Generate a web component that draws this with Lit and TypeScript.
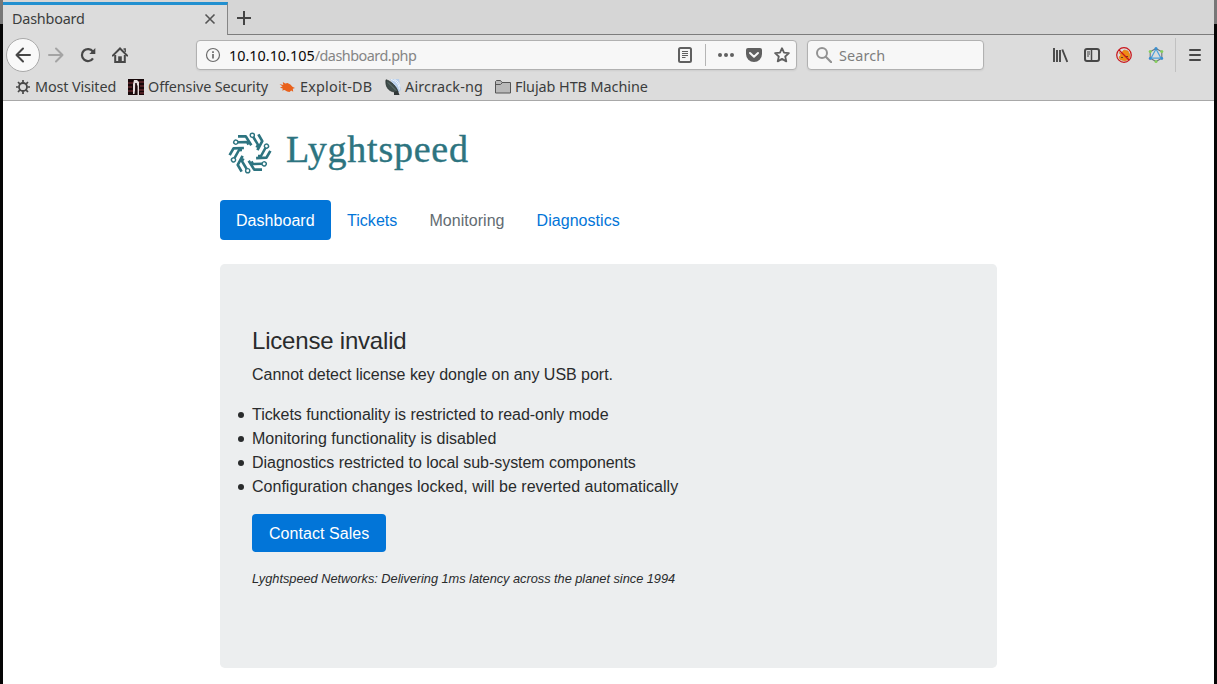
import { LitElement, html, svg, css } from "lit";
import { customElement } from "lit/decorators.js";

@customElement("browser-chrome")
class BrowserChrome extends LitElement {
  static styles = css`
    :host { display: block; height: 101px; box-sizing: border-box; background: #dcdcdc; border-bottom: 1px solid #a8a8a8; font: 14.4px/20px "Noto Sans", sans-serif; color: #3b3d3d; white-space: nowrap; }
    svg { display: block; flex: none; }
    .tabs { display: flex; height: 35px; box-sizing: border-box; background: #d6d6d6; }
    .tab { width: 225px; box-sizing: border-box; margin-top: 2px; border-top: 3px solid #2290d0; border-right: 1px solid #868686; background: #dcdcdc; display: flex; align-items: center; justify-content: space-between; padding: 0 11px 2px 9px; }
    .tab-title { letter-spacing: -0.2px; }
    .rest { flex: 1; border-bottom: 1px solid #7c7c7c; padding: 11px 0 0 9px; }
    .toolbar { display: flex; align-items: center; height: 40px; padding-left: 3px; }
    .back { width: 34px; height: 34px; box-sizing: border-box; border: 1px solid #a9a9a9; border-radius: 50%; background: #f9f9f9; display: grid; place-items: center; }
    .icons { display: flex; gap: 16px; margin-left: 8px; }
    .field { display: flex; align-items: center; box-sizing: border-box; height: 30px; background: #f7f7f7; border: 1px solid #b1b1b1; border-radius: 4px; box-shadow: 0 1px 2px #0001; }
    .url { width: 601px; margin-left: 68px; padding: 0 6px 0 8px; color: #858585; }
    .url-text { margin-left: 8px; flex: 1; padding-top: 2px; letter-spacing: -0.5px; }
    .host { color: #080808; letter-spacing: 0; }
    .sep { width: 1px; height: 22px; background: #b5b5b5; margin: 0 12px; }
    .search { width: 177px; margin-left: 10px; padding-left: 8px; gap: 7px; color: #7e7e7e; }
    .placeholder { padding-top: 2px; letter-spacing: 0.1px; }
    .right { display: flex; align-items: center; gap: 16px; margin-left: 68px; }
    .divider { width: 1px; height: 34px; background: #c1c1c1; margin: 0 11px; }
    .pocket { margin: 0 12px; }
    .bookmarks { display: flex; height: 23px; align-items: center; padding-left: 12px; }
    .bm { display: flex; align-items: center; gap: 4px; flex: none; }
    .b0 { width: 113px; letter-spacing: -0.13px; }
    .b1 { width: 151px; letter-spacing: -0.11px; }
    .b2 { width: 106px; letter-spacing: 0.2px; gap: 5px; }
    .b3 { width: 110px; letter-spacing: 0.18px; }
    .b4 { letter-spacing: -0.06px; }
  `;

  private icon(body: unknown, size = 16) {
    return html`<svg width=${size} height=${size} viewBox="0 0 16 16" fill="none" stroke="#474747" stroke-width="2">${body}</svg>`;
  }

  render() {
    return html`
      <div class="tabs">
        <div class="tab"><span class="tab-title">Dashboard</span>
          <svg width="12" height="12" viewBox="0 0 12 12" stroke="#555" stroke-width="1.6"><path d="M1.5 1.5l9 9m0-9l-9 9" /></svg></div>
        <div class="rest"><svg width="14" height="14" viewBox="0 0 14 14" stroke="#444" stroke-width="2"><path d="M7 0v14M0 7h14" /></svg></div>
      </div>
      <div class="toolbar">
        <div class="back">${this.icon(svg`<path d="M15 8H1.5M8 1.5L1.5 8 8 14.5" stroke-linecap="round" stroke-linejoin="round" />`)}</div>
        <div class="icons">
          ${this.icon(svg`<path d="M1 8h13.5M8 1.5L14.5 8 8 14.5" stroke="#a4a4a4" stroke-linecap="round" stroke-linejoin="round" />`)}
          ${this.icon(svg`<path d="M12.8 4.5A6 6 0 1 0 13 11.3" stroke-width="2.2" /><path d="M15.3 1v6H9.3z" fill="#474747" stroke="none" />`)}
          ${this.icon(svg`<path d="M.8 8.6L8 1.5l7.2 7.1" stroke-linecap="round" /><path d="M3.2 8v6.9h9.6V8" /><path d="M6.2 15V9.3h3.6V15" fill="#474747" stroke="none" /><path d="M11.5 2h1.7v3" stroke-width="1.4" />`)}
        </div>
        <div class="field url">
          ${this.icon(svg`<g stroke="#6b6b6b"><circle cx="8" cy="8" r="6.5" stroke-width="1.2" /><path d="M8 7v4.5M8 4.2v1.7" stroke-width="1.7" /></g>`)}
          <span class="url-text"><span class="host">10.10.10.105</span>/dashboard.php</span>
          ${this.icon(svg`<rect x="2" y="1" width="12" height="14" rx="1.5" stroke="#606060" /><path d="M5 4.5h6M5 6.5h6M5 8.5h6M5 10.5h3.5" stroke="#606060" stroke-width="1" />`)}
          <span class="sep"></span>
          ${this.icon(svg`<g fill="#606060" stroke="none"><circle cx="2" cy="8" r="2" /><circle cx="8" cy="8" r="2" /><circle cx="14" cy="8" r="2" /></g>`)}
          <svg class="pocket" width="16" height="16" viewBox="0 0 16 16"><path d="M2 1h12a2 2 0 0 1 2 2v4a8 8 0 0 1-16 0V3a2 2 0 0 1 2-2z" fill="#606060" /><path d="M4 6l4 3.8L12 6" fill="none" stroke="#f7f7f7" stroke-width="2" stroke-linecap="round" stroke-linejoin="round" /></svg>
          ${this.icon(svg`<path d="M8 1.2l2 4.5 4.9.5-3.7 3.3 1.1 4.9L8 11.9l-4.3 2.5 1.1-4.9L1.1 6.2 6 5.7z" stroke="#606060" stroke-width="1.8" stroke-linejoin="round" />`)}
        </div>
        <div class="field search">
          ${this.icon(svg`<circle cx="6" cy="6" r="5" stroke="#929292" /><path d="M9.8 9.8l5.4 5.4" stroke="#929292" stroke-width="2.2" stroke-linecap="round" />`)}
          <span class="placeholder">Search</span>
        </div>
        <div class="right">
          ${this.icon(svg`<path d="M2 1v14M5 3v12M8 3v12M10.3 2.5l5 12.5" stroke-width="1.9" />`)}
          ${this.icon(svg`<rect x="1" y="2" width="14" height="12" rx="2" /><path d="M7.5 2v12" stroke-width="1.5" /><path d="M3 5h3M3 7h3M3 9h2" stroke-width="1" />`)}
          ${this.icon(svg`<path d="M3 5.5l2 .8 3-3.3 4 1 2 4-1 4-4 2-5-1.5-1-2.5 2-2z" fill="#f08a14" stroke="#d87916" stroke-width=".6" /><path d="M5 10h2v1H5zM9 9h3v1H9z" fill="#65451c" stroke="none" /><circle cx="8" cy="8" r="7.3" stroke="#c9141b" stroke-width="1.2" /><path d="M3 3l10 10" stroke="#c9141b" stroke-width="1.2" />`)}
          ${this.icon(svg`<path d="M8 1.5l5.8 3.2v6.6L8 14.5l-5.8-3.2V4.7z" stroke="#69757b" stroke-width="1.1" /><path d="M8 2L3 11.2h10z" stroke="#4ba0dc" stroke-width="1.2" /><g stroke="none" fill="#398fd2"><circle cx="8" cy="1.5" r="1.5" /><circle cx="2.2" cy="11.5" r="1.4" /><circle cx="13.8" cy="11.5" r="1.4" /></g><g stroke="none" fill="#86cf5c"><circle cx="2.2" cy="4.5" r="1.5" /><circle cx="13.8" cy="4.5" r="1.5" /><circle cx="8" cy="14.5" r="1.5" /></g>`)}
        </div>
        <span class="divider"></span>
        ${this.icon(svg`<path d="M3 3h10M3 8h10M3 13h10" stroke-linecap="round" />`)}
      </div>
      <div class="bookmarks">
        <div class="bm b0">${this.icon(svg`<circle cx="8" cy="8" r="4" stroke-width="1.8" /><path d="M8 1v2.4M8 12.6V15M1 8h2.4M12.6 8H15M3 3l1.8 1.8M11.2 11.2L13 13M13 3l-1.8 1.8M4.8 11.2L3 13" stroke-width="1.7" />`)}Most Visited</div>
        <div class="bm b1"><svg width="16" height="16" viewBox="0 0 16 16"><path d="M0 0h16v16H0z" fill="#170709" /><path d="M0 4h5M0 8h4M0 12h5M11 3h5M12 7h4M11 11h5M12 14h4" stroke="#60272b" stroke-width="1.3" /><path d="M6 1h3l2 2v13H9.6V7L8 4 6.5 15H5V5z" fill="#e5dddd" /><path d="M7.2 4h1.5v11H7z" fill="#201014" /></svg>Offensive Security</div>
        <div class="bm b2">${this.icon(svg`<path d="M.5 5l3.8 1L3.8 3l2.4 1.6L8.500 4l2.900 1.500 2 2.300L16 9l-2.200.8.4 3-2-1.200-1.700 1.400-2.400-.6-2.500-1.400-2.600.5 1-1.700L1 8.500l2.600-1z" fill="#e9611b" stroke="none" />`)}Exploit-DB</div>
        <div class="bm b3"><svg width="16" height="16" viewBox="0 0 16 16"><path d="M5 0h9l2 11-3 3z" fill="#b9cfea" /><path d="M6 .5c5 1 8 5 8.500 10M9.500 .5c3 1 5 4 5.500 7" stroke="#f0f5fb" fill="none" stroke-width="1" /><path d="M1 .8C0 8 4 14 13 13 12 8 6 2 1 .8z" fill="#3f4d4b" stroke="#27302f" stroke-width=".8" /><path d="M3 3.500l8 8" stroke="#70807c" stroke-width=".8" /><path d="M9 13l4-1 1.500 4H9z" fill="#303737" /></svg>Aircrack-ng</div>
        <div class="bm b4">${this.icon(svg`<path d="M.5 14V2.500l1-1h4l1.500 2h8.500V14z" fill="#b9b9b9" stroke="#555" stroke-width="1" /><path d="M1 5.500h4.500l1.500-1.500" stroke="#555" stroke-width="1" />`)}Flujab HTB Machine</div>
      </div>`;
  }
}

@customElement("app-root")
class AppRoot extends LitElement {
  static styles = css`
    :host { display: block; box-sizing: border-box; height: 684px; overflow: hidden; background: linear-gradient(#777 24px, #050505 24px); padding: 0 3px; }
    .window { height: 684px; background: #fff; color: #292b2c; font: 16px/24px "Liberation Sans", sans-serif; }
    .container { width: 777px; margin-left: 217px; padding-top: 29px; }
    .brand { display: flex; align-items: center; height: 46px; padding-left: 8px; gap: 14px; color: #2d7480; }
    .word { font: 38px/46px "Liberation Serif", serif; letter-spacing: 0.75px; padding-bottom: 8px; -webkit-text-stroke: 0.4px #2d7480; }
    .nav { display: flex; margin-top: 24px; letter-spacing: 0.045px; }
    .link { padding: 9px 16px 7px; color: #0275d8; }
    .active { background: #0275d8; color: #fff; border-radius: 4px; padding-right: 16.3px; }
    .disabled { color: #636c72; }
    .panel { box-sizing: border-box; height: 404px; margin-top: 24px; padding: 64px 32px; background: #eceeef; border-radius: 4.8px; }
    .title { font-size: 24px; line-height: 26.4px; font-weight: 400; margin: 0 0 9px; letter-spacing: -0.2px; }
    .lead { margin: 0 0 16px; letter-spacing: -0.02px; }
    .list { margin: 0 0 15px; padding: 0; list-style: none; }
    .item { display: flex; align-items: center; gap: 8px; margin-left: -14px; }
    .item::before { content: ""; width: 6px; height: 6px; border-radius: 50%; background: #292b2c; }
    .tight { letter-spacing: -0.04px; }
    .loose { letter-spacing: 0.018px; }
    .button { display: inline-block; box-sizing: border-box; height: 38px; padding: 8px 16.5px 6px 17px; background: #0275d8; color: #fff; border-radius: 4px; vertical-align: top; letter-spacing: 0.05px; }
    .tagline { font-size: 12.8px; font-style: italic; margin: 15px 0 0; letter-spacing: -0.028px; }
  `;

  render() {
    return html`
      <div class="window">
        <browser-chrome></browser-chrome>
        <div class="container">
          <div class="brand">
            <svg width="44" height="44" viewBox="-22 -22 44 44" fill="none" stroke="#2d7480" stroke-width="2.7">
              ${[0, 60, 120, 180, 240, 300].map((a) => svg`<g transform="rotate(${a})"><path d="M-12 -16.6H-4.2L1.3 -7.800" stroke-linejoin="round" /><path d="M3.300 -16L8 -8.200L6.500 -5.500" stroke-width="2.500" /><circle cx="2.300" cy="-17.700" r="2.100" fill="#fff" stroke-width="1.400" /></g>`)}
            </svg>
            <span class="word">Lyghtspeed</span>
          </div>
          <nav class="nav">
            <a class="link active">Dashboard</a><a class="link">Tickets</a><a class="link disabled">Monitoring</a><a class="link">Diagnostics</a>
          </nav>
          <main class="panel">
            <h4 class="title">License invalid</h4>
            <p class="lead">Cannot detect license key dongle on any USB port.</p>
            <ul class="list">
              <li class="item tight">Tickets functionality is restricted to read-only mode</li>
              <li class="item loose">Monitoring functionality is disabled</li>
              <li class="item tight">Diagnostics restricted to local sub-system components</li>
              <li class="item loose">Configuration changes locked, will be reverted automatically</li>
            </ul>
            <a class="button">Contact Sales</a>
            <p class="tagline">Lyghtspeed Networks: Delivering 1ms latency across the planet since 1994</p>
          </main>
        </div>
      </div>`;
  }
}
